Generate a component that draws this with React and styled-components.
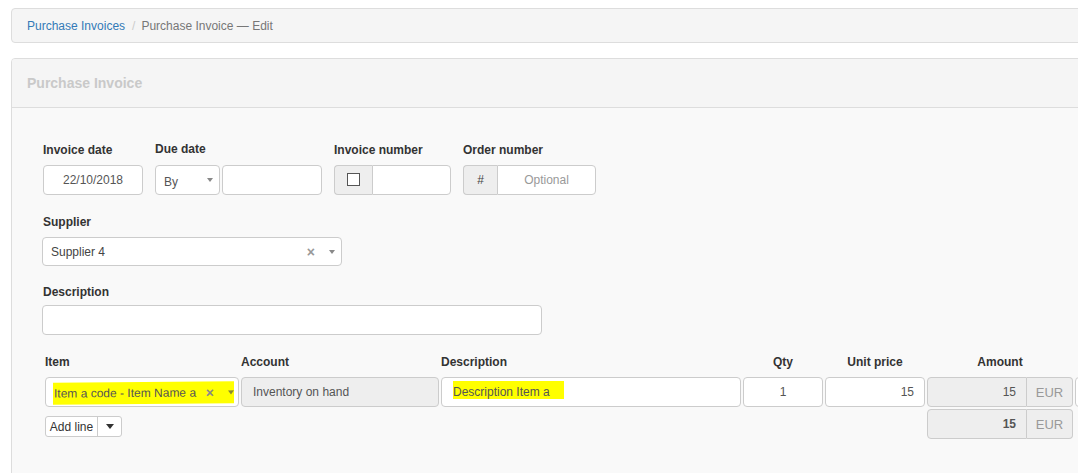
import React from 'react';
import styled, { createGlobalStyle } from 'styled-components';

const Global = createGlobalStyle`
  html, body { margin: 0; padding: 0; background: #fff; overflow: hidden; }
  body { font-family: "Liberation Sans", Arial, sans-serif; font-size: 12px; color: #333; }
  * { box-sizing: border-box; }
`;

const Page = styled.div`
  width: 1180px;
  padding: 8px 0 0 11px;
`;

const Breadcrumb = styled.nav`
  height: 35px;
  display: flex;
  align-items: center;
  padding: 0 15px;
  background: #f5f5f5;
  border: 1px solid #ddd;
  border-radius: 4px;
`;
const Crumb = styled.a`
  color: #337ab7;
  text-decoration: none;
`;
const Sep = styled.span`
  color: #ccc;
  padding: 0 6px 0 7px;
`;
const Current = styled.span`
  color: #777;
`;

const Panel = styled.section`
  margin-top: 15px;
  border: 1px solid #ddd;
  border-radius: 4px;
  background: #f9f9f9;
  height: 440px;
`;
const PanelHeading = styled.header`
  height: 49px;
  display: flex;
  align-items: center;
  padding: 0 15px;
  background: #f5f5f5;
  border-bottom: 1px solid #ddd;
  border-radius: 3px 3px 0 0;
`;
const Title = styled.h2`
  margin: 0;
  font-size: 14px;
  font-weight: bold;
  color: #c9c9c9;
`;
const PanelBody = styled.div`
  padding: 34px 0 0 30px;
`;

const FieldRow = styled.div`
  display: flex;
  gap: 12px;
  padding-left: ${p => p.$indent || 0}px;
  margin-top: ${p => p.$top || 0}px;
`;
const Field = styled.div`
  display: flex;
  flex-direction: column;
`;
const Label = styled.label`
  display: block;
  font-weight: bold;
  line-height: 16px;
  color: #333;
  margin-top: ${p => (p.$raise ? -1 : 0)}px;
  margin-bottom: ${p => (p.$raise ? 8 : 7) - (p.$tight ? 2 : 0)}px;
  padding-left: ${p => p.$indent || 0}px;
`;

const Inline = styled.div`
  display: flex;
  gap: ${p => p.$gap || 0}px;
`;

const Box = styled.div`
  width: ${p => p.$w}px;
  height: ${p => p.$h || 30}px;
  display: flex;
  align-items: center;
  justify-content: ${p => p.$align || 'flex-start'};
  padding: 0 ${p => p.$pr ?? 8}px 0 ${p => p.$pl ?? 8}px;
  background: ${p => (p.$readonly ? '#eee' : '#fff')};
  border: 1px solid #ccc;
  border-radius: ${p => p.$radius || '4px'};
  color: ${p => (p.$muted ? '#999' : '#555')};
  font-weight: ${p => (p.$bold ? 'bold' : 'normal')};
  white-space: nowrap;
  overflow: hidden;
`;

const Addon = styled.div`
  width: ${p => p.$w}px;
  height: 30px;
  display: flex;
  align-items: center;
  justify-content: center;
  background: #eee;
  border: 1px solid #ccc;
  border-right: ${p => (p.$right ? '1px solid #ccc' : 'none')};
  border-left: ${p => (p.$right ? 'none' : '1px solid #ccc')};
  border-radius: ${p => (p.$right ? '0 4px 4px 0' : '4px 0 0 4px')};
  color: ${p => (p.$right ? '#999' : '#444')};
  font-size: ${p => (p.$right ? 13 : 12)}px;
`;

const CheckSquare = styled.span`
  width: 13px;
  height: 13px;
  border: 1px solid #555;
  background: #fff;
  margin-bottom: 2px;
`;

const Caret = styled.span`
  width: 0;
  height: 0;
  border-left: ${p => p.$size || 3}px solid transparent;
  border-right: ${p => p.$size || 3}px solid transparent;
  border-top: ${p => (p.$size || 3) + 1}px solid ${p => p.$color || '#888'};
  margin-left: ${p => p.$ml || 0}px;
`;

const Clear = styled.span`
  font-weight: bold;
  font-size: 14px;
  color: ${p => p.$color || '#999'};
  line-height: 1;
  margin-left: auto;
  margin-right: ${p => p.$mr || 12}px;
`;

const Spacer = styled.span`
  flex: 1;
`;

const Highlight = styled.div`
  flex: 1;
  height: 100%;
  display: flex;
  align-items: center;
  background: #ffff00;
  color: #555;
  padding-left: 1px;
  transform: skewY(-0.4deg);
`;

const Marker = styled.span`
  display: inline-block;
  background: #ffff00;
  height: 18px;
  line-height: 22px;
  padding-right: 14px;
  margin-top: -5px;
  overflow: visible;
`;

const Table = styled.div`
  margin-left: 3px;
  margin-top: ${p => p.$top || 0}px;
`;
const Grid = styled.div`
  display: grid;
  grid-template-columns: 194px 198px 300px 80px 100px 146px 40px;
  column-gap: 2px;
  align-items: start;
  margin-top: ${p => p.$top || 0}px;
  height: ${p => (p.$h ? `${p.$h}px` : 'auto')};
`;
const Head = styled.div`
  font-weight: bold;
  line-height: 16px;
  color: #333;
  text-align: ${p => (p.$center ? 'center' : 'left')};
  grid-column: ${p => p.$col || 'auto'};
`;
const Cell = styled.div`
  grid-column: ${p => p.$col || 'auto'};
  display: flex;
  margin-top: ${p => p.$top || 0}px;
`;

const SplitButton = styled.div`
  display: inline-flex;
  height: 21px;
  border: 1px solid #ccc;
  border-radius: 3px;
  background: #fff;
`;
const BtnPart = styled.span`
  display: flex;
  align-items: center;
  justify-content: center;
  width: ${p => p.$w}px;
  color: #333;
  border-left: ${p => (p.$divider ? '1px solid #ccc' : 'none')};
  white-space: nowrap;
`;

const ItemSelect = styled.div`
  width: 194px;
  height: 30px;
  display: flex;
  padding: 4px 4px 2px 7px;
  background: #fff;
  border: 1px solid #ccc;
  border-radius: 4px;
`;

const AmountGroup = ({ value, bold }) => (
  <Inline>
    <Box $w={100} $readonly $align="flex-end" $pr={10} $radius="4px 0 0 4px" $bold={bold}>
      {value}
    </Box>
    <Addon $w={46} $right>EUR</Addon>
  </Inline>
);

export default function App() {
  return (
    <>
      <Global />
      <Page>
        <Breadcrumb>
          <Crumb href="#">Purchase Invoices</Crumb>
          <Sep>/</Sep>
          <Current>Purchase Invoice — Edit</Current>
        </Breadcrumb>
        <Panel>
          <PanelHeading>
            <Title>Purchase Invoice</Title>
          </PanelHeading>
          <PanelBody>
            <FieldRow $indent={1}>
              <Field>
                <Label>Invoice date</Label>
                <Box $w={100} $align="center">22/10/2018</Box>
              </Field>
              <Field>
                <Label $raise>Due date</Label>
                <Inline $gap={2}>
                  <Box $w={65} $pr={6}>
                    <span style={{ marginTop: 3 }}>By</span>
                    <Spacer />
                    <Caret $size={3} />
                  </Box>
                  <Box $w={100} />
                </Inline>
              </Field>
              <Field>
                <Label>Invoice number</Label>
                <Inline>
                  <Addon $w={38}><CheckSquare /></Addon>
                  <Box $w={79} $radius="0 4px 4px 0" />
                </Inline>
              </Field>
              <Field>
                <Label>Order number</Label>
                <Inline>
                  <Addon $w={34}>#</Addon>
                  <Box $w={99} $radius="0 4px 4px 0" $align="center" $muted>Optional</Box>
                </Inline>
              </Field>
            </FieldRow>

            <FieldRow $top={19}>
              <Field>
                <Label $indent={1}>Supplier</Label>
                <Box $w={300} $h={29} $pr={6} $pl={8}>
                  <span style={{ color: '#444' }}>Supplier 4</span>
                  <Clear $mr={14}>×</Clear>
                  <Caret $size={3} />
                </Box>
              </Field>
            </FieldRow>

            <FieldRow $top={18}>
              <Field>
                <Label $indent={1} $tight>Description</Label>
                <Box $w={500} />
              </Field>
            </FieldRow>

            <Table $top={19}>
              <Grid $h={23}>
                <Head>Item</Head>
                <Head>Account</Head>
                <Head>Description</Head>
                <Head $center>Qty</Head>
                <Head $center>Unit price</Head>
                <Head $center>Amount</Head>
              </Grid>
              <Grid>
                <Cell>
                  <ItemSelect>
                    <Highlight>
                      Item a code - Item Name a
                      <Clear $mr={14} $color="#888">×</Clear>
                      <Caret $size={3} $color="#8a8a30" />
                    </Highlight>
                  </ItemSelect>
                </Cell>
                <Cell>
                  <Box $w={198} $readonly $pl={11}>Inventory on hand</Box>
                </Cell>
                <Cell>
                  <Box $w={300} $pl={11}>
                    <Marker>Description Item a</Marker>
                  </Box>
                </Cell>
                <Cell>
                  <Box $w={80} $align="center">1</Box>
                </Cell>
                <Cell>
                  <Box $w={100} $align="flex-end" $pr={10}>15</Box>
                </Cell>
                <Cell>
                  <AmountGroup value="15" />
                </Cell>
                <Cell>
                  <Box $w={40} />
                </Cell>
              </Grid>
              <Grid $top={2}>
                <Cell $top={7}>
                  <SplitButton>
                    <BtnPart $w={51}>Add line</BtnPart>
                    <BtnPart $w={24} $divider><Caret $size={4} $color="#333" /></BtnPart>
                  </SplitButton>
                </Cell>
                <Cell $col="6">
                  <AmountGroup value="15" bold />
                </Cell>
              </Grid>
            </Table>
          </PanelBody>
        </Panel>
      </Page>
    </>
  );
}
